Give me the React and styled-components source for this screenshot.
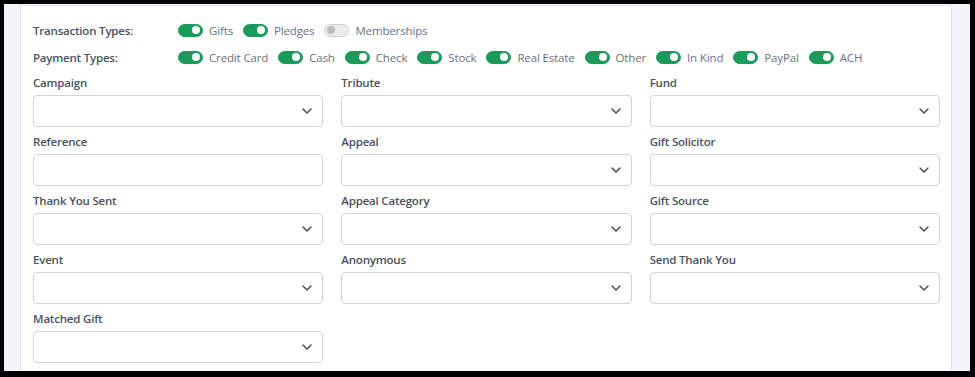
import React from "react";
import styled, { createGlobalStyle } from "styled-components";

const GlobalStyle = createGlobalStyle`
  html, body {
    margin: 0;
    padding: 0;
    background: #000;
  }
  * { box-sizing: border-box; }
`;

const Frame = styled.div`
  width: 975px;
  height: 377px;
  padding: 4px 5px 6px 4px;
  background: #000;
  overflow: hidden;
`;

const Backdrop = styled.div`
  height: 100%;
  padding: 1px 18px 0 16px;
  background: #f4f4fc;
  overflow: hidden;
`;

const Card = styled.div`
  height: 100%;
  background: #fff;
  border: 1px solid #e3e3ea;
  border-bottom: none;
  padding: 14px 11px 0 12px;
  font-family: "Open Sans", "Noto Sans", sans-serif;
  font-size: 11.5px;
  letter-spacing: -0.15px;
`;

const ToggleRow = styled.div`
  display: flex;
  align-items: center;
  height: 20px;
  margin-bottom: 7px;
`;

const RowLabel = styled.div`
  width: 145px;
  flex: none;
  font-weight: 600;
  letter-spacing: -0.2px;
  color: #4a5261;
`;

const Options = styled.div`
  display: flex;
  align-items: center;
  gap: 10px;
`;

const Option = styled.label`
  display: flex;
  align-items: center;
  gap: 6px;
  color: #6b7280;
`;

const Switch = styled.span`
  position: relative;
  width: 25px;
  height: 13px;
  border-radius: 7px;
  flex: none;
  background: ${p => (p.$on ? "#1a9b5c" : "#ececec")};
  border: 1px solid ${p => (p.$on ? "#1a9b5c" : "#d0d0d0")};
  &::after {
    content: "";
    position: absolute;
    top: 1.5px;
    left: ${p => (p.$on ? "13px" : "2px")};
    width: 8px;
    height: 8px;
    border-radius: 50%;
    background: ${p => (p.$on ? "#fff" : "#bdbdbd")};
  }
`;

const Grid = styled.div`
  display: grid;
  grid-template-columns: repeat(3, 1fr);
  column-gap: 18px;
  row-gap: 6px;
  margin-top: 2px;
`;

const Field = styled.div`
  display: flex;
  flex-direction: column;
  gap: 4px;
`;

const FieldLabel = styled.div`
  height: 17px;
  line-height: 17px;
  font-weight: 600;
  letter-spacing: -0.2px;
  color: #4a5261;
`;

const Select = styled.div`
  height: 32px;
  border: 1px solid #cfd3da;
  border-radius: 4px;
  background: #fff;
  display: flex;
  align-items: center;
  justify-content: flex-end;
  padding-right: 10px;
`;

const Chevron = () => (
  <svg width="10" height="6" viewBox="0 0 10 6" fill="none">
    <path d="M1 1l4 4 4-4" stroke="#3d4450" strokeWidth="1.4" strokeLinecap="round" strokeLinejoin="round" />
  </svg>
);

const transactionTypes = [
  { name: "Gifts", on: true },
  { name: "Pledges", on: true },
  { name: "Memberships", on: false },
];

const paymentTypes = ["Credit Card", "Cash", "Check", "Stock", "Real Estate", "Other", "In Kind", "PayPal", "ACH"];

const fields = [
  { label: "Campaign", select: true },
  { label: "Tribute", select: true },
  { label: "Fund", select: true },
  { label: "Reference", select: false },
  { label: "Appeal", select: true },
  { label: "Gift Solicitor", select: true },
  { label: "Thank You Sent", select: true },
  { label: "Appeal Category", select: true },
  { label: "Gift Source", select: true },
  { label: "Event", select: true },
  { label: "Anonymous", select: true },
  { label: "Send Thank You", select: true },
  { label: "Matched Gift", select: true },
];

export default function App() {
  return (
    <Frame>
      <GlobalStyle />
      <Backdrop>
        <Card>
          <ToggleRow>
            <RowLabel>Transaction Types:</RowLabel>
            <Options>
              {transactionTypes.map(t => (
                <Option key={t.name}>
                  <Switch $on={t.on} />
                  {t.name}
                </Option>
              ))}
            </Options>
          </ToggleRow>
          <ToggleRow>
            <RowLabel>Payment Types:</RowLabel>
            <Options>
              {paymentTypes.map(t => (
                <Option key={t}>
                  <Switch $on />
                  {t}
                </Option>
              ))}
            </Options>
          </ToggleRow>
          <Grid>
            {fields.map(f => (
              <Field key={f.label}>
                <FieldLabel>{f.label}</FieldLabel>
                <Select>{f.select && <Chevron />}</Select>
              </Field>
            ))}
          </Grid>
        </Card>
      </Backdrop>
    </Frame>
  );
}
